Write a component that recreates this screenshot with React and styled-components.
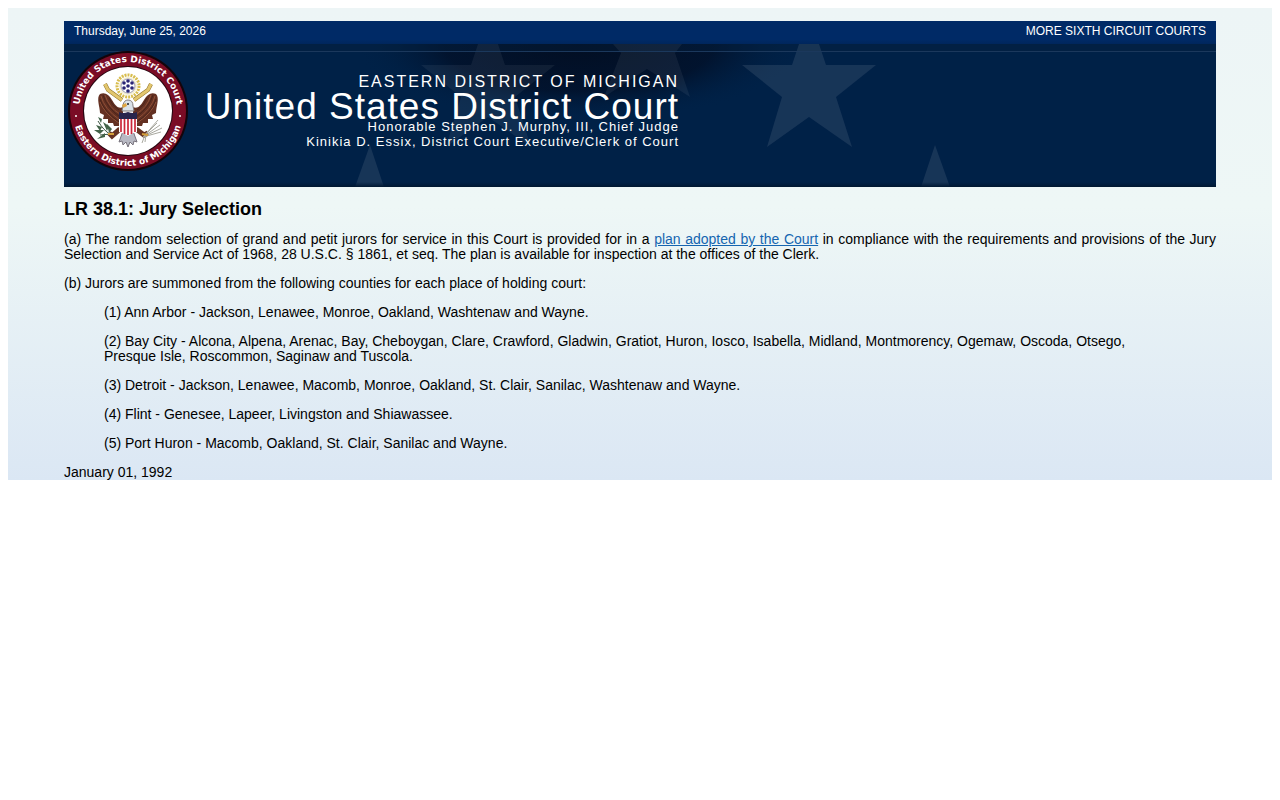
import React from 'react';
import styled, { createGlobalStyle } from 'styled-components';

const GlobalStyle = createGlobalStyle`
  body {
    margin: 8px;
    background: #fff;
    color: #000;
    font-family: Arial, "Liberation Sans", sans-serif;
    font-size: 14px;
    line-height: 15px;
  }
`;

const Page = styled.div`
  padding: 13px 56px 0;
  background: linear-gradient(#edf5f6 0, #eef7f6 42%, #dbe7f4 100%);
`;

const TopBar = styled.nav`
  display: flex;
  justify-content: space-between;
  padding: 2px 10px 5px;
  background: linear-gradient(#002a66 80%, #00265c);
  color: #fff;
  font-size: 12px;
  line-height: 16px;
`;

const TopLink = styled.a`
  color: #fff;
  text-decoration: none;
`;

const Banner = styled.header`
  position: relative;
  display: flex;
  align-items: flex-start;
  min-height: 143px;
  overflow: hidden;
  background: #002147;
  color: #fff;
`;

const Backdrop = styled.svg`
  position: absolute;
  inset: 0;
  width: 100%;
  height: 100%;
`;

const Seal = styled.svg`
  position: relative;
  flex: none;
  width: 122px;
  height: 122px;
  margin: 6px 0 0 3px;
`;

const Titles = styled.div`
  position: relative;
  width: 490px;
  padding-top: 29px;
  text-align: right;
`;

const District = styled.div`
  font-size: 16px;
  line-height: 18px;
  letter-spacing: 2px;
`;

const CourtName = styled.h1`
  margin: 0 0 -4px;
  font-size: 37px;
  font-weight: 400;
  line-height: 32px;
  letter-spacing: 1px;
`;

const Officer = styled.div`
  font-size: 13px;
  line-height: 15px;
  letter-spacing: 1px;
`;

const RuleTitle = styled.h2`
  margin: 12px 0 13px;
  font-size: 18px;
  line-height: 20px;
`;

const Paragraph = styled.p`
  margin: 0 0 14px;
  text-align: ${(p) => (p.$justify ? 'justify' : 'left')};
`;

const RuleLink = styled.a`
  color: #1565b0;
`;

const Counties = styled.div`
  margin: 0 40px;
`;

const Effective = styled.div``;

const counties = [
  '(1) Ann Arbor - Jackson, Lenawee, Monroe, Oakland, Washtenaw and Wayne.',
  '(2) Bay City - Alcona, Alpena, Arenac, Bay, Cheboygan, Clare, Crawford, Gladwin, Gratiot, Huron, Iosco, Isabella, Midland, Montmorency, Ogemaw, Oscoda, Otsego, Presque Isle, Roscommon, Saginaw and Tuscola.',
  '(3) Detroit - Jackson, Lenawee, Macomb, Monroe, Oakland, St. Clair, Sanilac, Washtenaw and Wayne.',
  '(4) Flint - Genesee, Lapeer, Livingston and Shiawassee.',
  '(5) Port Huron - Macomb, Oakland, St. Clair, Sanilac and Wayne.',
];

const STAR = '0,-51 17,0 67,0 27,32 43,82 0,52 -42,82 -27,32 -67,0 -17,0';

function BannerBackdrop() {
  return (
    <Backdrop aria-hidden="true">
      <defs>
        <radialGradient id="shade">
          <stop offset="0" stopColor="#020e22" />
          <stop offset=".6" stopColor="#020f26" stopOpacity=".75" />
          <stop offset="1" stopColor="#002147" stopOpacity="0" />
        </radialGradient>
        <linearGradient id="foot" x1="0" y1="0" x2="0" y2="1">
          <stop offset="0" stopColor="#001a38" stopOpacity="0" />
          <stop offset="1" stopColor="#001730" />
        </linearGradient>
      </defs>
      <ellipse cx="515" cy="0" rx="225" ry="78" fill="url(#shade)" />
      <rect width="100%" height="8" fill="#06203f" fillOpacity=".4" />
      <g fill="#fff" fillOpacity=".09">
        <polygon points={STAR} transform="translate(424 21)" fillOpacity=".06" />
        <polygon points={STAR} transform="translate(745 21)" />
        <polygon points="549,0 557,9 540,53 583,25 626,53 611,9 618,0" fillOpacity=".06" />
        <polygon points="306,101 320,143 291,143" />
        <polygon points="871,101 886,143 857,143" />
      </g>
      <rect y="7" width="100%" height="1" fill="#1b385c" />
      <rect y="138" width="100%" height="5" fill="url(#foot)" />
    </Backdrop>
  );
}

function Wing() {
  return (
    <g>
      <path d="M-4 -7C-8 -5 -11 -7 -15 -14Q-20 -23 -27 -20C-31 -16 -27 -7 -27 -1L-23 1L-24 5L-19 5L-19 9L-14 9L-13 12L-6 12L-4 0Z" fill="#633022" />
      <g fill="none" stroke="#8f5037" strokeWidth="1">
        <path d="M-26 -18Q-23 -5 -7 6M-22 -19Q-18 -6 -7 0M-27 -12Q-22 0 -8 9" />
      </g>
      <g fill="none" stroke="#4a241a" strokeWidth="1">
        <path d="M-27 -15Q-23 -2 -8 8M-24 -19Q-20 -6 -7 3M-18 -16Q-15 -8 -8 -4" />
      </g>
    </g>
  );
}

function CourtSeal() {
  return (
    <Seal viewBox="-61 -61 122 122" role="img" aria-label="Court seal">
      <defs>
        <path id="arc-top" d="M-49 0A49 49 0 0 1 49 0" />
        <path id="arc-bottom" d="M-55 0A55 55 0 0 0 55 0" />
      </defs>
      <circle r="60" fill="#14040a" />
      <circle r="58" fill="#7a0c25" />
      <circle r="45" fill="#240610" />
      <circle r="44" fill="#fff" />
      <g fill="#fff" fontFamily="'DejaVu Sans', sans-serif" fontSize="9" fontWeight="700" textAnchor="middle">
        <text><textPath href="#arc-top" startOffset="50%">United States District Court</textPath></text>
        <text><textPath href="#arc-bottom" startOffset="50%">Eastern District of Michigan</textPath></text>
      </g>
      <circle cx="-52" cy="5" r="1" fill="#fff" />
      <circle cx="52" cy="5" r="1" fill="#fff" />

      <circle cy="-25" r="11" fill="none" stroke="#d8bd4e" strokeWidth="3" strokeDasharray="2 1" />
      <circle cy="-25" r="9" fill="#f4eed2" />
      <circle cy="-25" r="7" fill="#fff" stroke="#9c9cbb" strokeWidth="1" />
      <g fill="#292575">
        {[[0, -30], [-4, -28], [4, -28], [0, -25], [-4, -23], [4, -23], [0, -20]].map(([x, y]) => (
          <circle key={`${x}:${y}`} cx={x} cy={y} r="1.8" />
        ))}
      </g>
      <path d="M-23 -27L-20 -21L-6 -11M23 -27L20 -21L6 -11" fill="none" stroke="#92742b" strokeWidth="4" />
      <path d="M-23 -27L-20 -21L-6 -11M23 -27L20 -21L6 -11" fill="none" stroke="#e2c66d" strokeWidth="3" />

      <g transform="translate(-1 3)"><Wing /></g>
      <g transform="translate(1 3) scale(-1 1)"><Wing /></g>
      <path d="M-8 18L-16 25L-19 22M8 18L16 24L20 22" fill="none" stroke="#663323" strokeWidth="5" />
      <path d="M-5 20L-9 31L-6 30L-5 34L-2 31L0 36L2 31L5 34L6 30L9 31L5 20Z" fill="#b8b9c3" stroke="#77727c" strokeWidth="1" />
      <path d="M-6 0L-5 -6Q-4 -11 0 -11Q5 -11 5 -5L6 0Z" fill="#d9e1e8" stroke="#837c7c" strokeWidth="1" />
      <path d="M-2 -8L-6 -6L-5 -3L-1 -5Z" fill="#dfa43f" />
      <circle cy="-7" r="1" fill="#222" />
      <path d="M-9 5H9V21Q4 22 0 25Q-4 22 -9 21Z" fill="#fff" />
      <path d="M-7 5V21M-3.500 5V23M0 5V24M3.500 5V23M7 5V21" stroke="#cb2739" strokeWidth="1.700" />
      <path d="M-9 1Q-5 3 0 1Q5 3 9 1V8H-9Z" fill="#28254d" />
      <path d="M-18 23Q-24 20 -30 10M-17 23L-28 24" fill="none" stroke="#38523e" strokeWidth="1" />
      <path d="M-21 20L-25 11L-19 15ZM-26 16L-32 14L-28 20ZM-27 12L-30 6L-26 8ZM-24 19L-34 19L-28 23ZM-23 22L-31 28L-23 26ZM-19 22L-21 13L-16 18Z" fill="#426248" />
      <path d="M15 26L29 12M15 26L32 14M15 26L34 17M15 26L33 21M15 26L30 9" fill="none" stroke="#a9a9a0" strokeWidth="1" />
      <path d="M17 24L14 32M18 24L17 31" stroke="#a9a9a0" strokeWidth="1" />
      <path d="M-20 23L-14 23M14 23L20 24" stroke="#d39e3a" strokeWidth="2" />
    </Seal>
  );
}

export default function App() {
  return (
    <>
      <GlobalStyle />
      <Page>
        <TopBar>
          <span>Thursday, June 25, 2026</span>
          <TopLink href="#courts">MORE SIXTH CIRCUIT COURTS</TopLink>
        </TopBar>
        <Banner>
          <BannerBackdrop />
          <CourtSeal />
          <Titles>
            <District>EASTERN DISTRICT OF MICHIGAN</District>
            <CourtName>United States District Court</CourtName>
            <Officer>Honorable Stephen J. Murphy, III, Chief Judge</Officer>
            <Officer>Kinikia D. Essix, District Court Executive/Clerk of Court</Officer>
          </Titles>
        </Banner>
        <main>
          <RuleTitle>LR 38.1: Jury Selection</RuleTitle>
          <Paragraph $justify>
            (a) The random selection of grand and petit jurors for service in this Court is provided for in a{' '}
            <RuleLink href="#plan">plan adopted by the Court</RuleLink> in compliance with the requirements and
            provisions of the Jury Selection and Service Act of 1968, 28 U.S.C. § 1861, et seq. The plan is available
            for inspection at the offices of the Clerk.
          </Paragraph>
          <Paragraph>(b) Jurors are summoned from the following counties for each place of holding court:</Paragraph>
          <Counties>
            {counties.map((text) => (
              <Paragraph key={text}>{text}</Paragraph>
            ))}
          </Counties>
          <Effective>January 01, 1992</Effective>
        </main>
      </Page>
    </>
  );
}
